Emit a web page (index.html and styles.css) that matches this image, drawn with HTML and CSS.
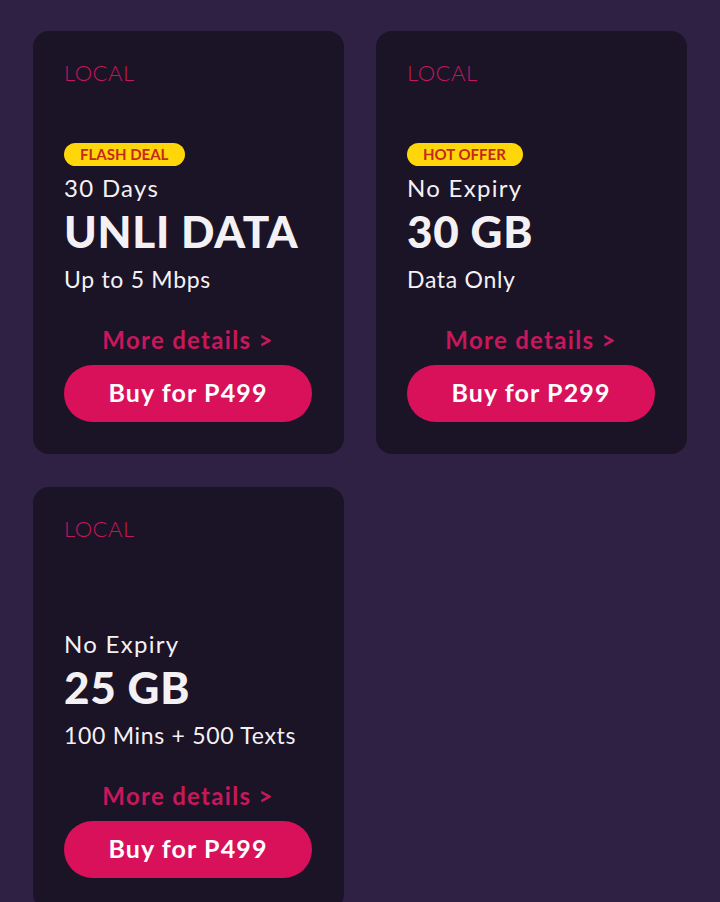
FILE: index.html
```html
<!DOCTYPE html>
<html>
<head>
<meta charset="utf-8">
<link rel="stylesheet" href="styles.css">
</head>
<body>
<div class="grid">
  <div class="card">
    <div class="tag">LOCAL</div>
    <div class="badge-slot"><span class="badge">FLASH DEAL</span></div>
    <div class="validity">30 Days</div>
    <div class="amount">UNLI DATA</div>
    <div class="desc">Up to 5 Mbps</div>
    <div class="more">More details &gt;</div>
    <button class="buy">Buy for P499</button>
  </div>
  <div class="card">
    <div class="tag">LOCAL</div>
    <div class="badge-slot"><span class="badge">HOT OFFER</span></div>
    <div class="validity">No Expiry</div>
    <div class="amount">30 GB</div>
    <div class="desc">Data Only</div>
    <div class="more">More details &gt;</div>
    <button class="buy">Buy for P299</button>
  </div>
  <div class="card">
    <div class="tag">LOCAL</div>
    <div class="badge-slot"></div>
    <div class="validity">No Expiry</div>
    <div class="amount">25 GB</div>
    <div class="desc">100 Mins + 500 Texts</div>
    <div class="more">More details &gt;</div>
    <button class="buy">Buy for P499</button>
  </div>
</div>
</body>
</html>
```
FILE: styles.css
```css
html, body {
  margin: 0;
  padding: 0;
  background: #2f2143;
  font-family: Lato, "Noto Sans", sans-serif;
  color: #f4f1f5;
  overflow: hidden;
}
.grid {
  display: grid;
  grid-template-columns: 311px 311px;
  column-gap: 32px;
  row-gap: 33px;
  padding: 31px 33px;
}
.card {
  background: #1b1326;
  border-radius: 16px;
  padding: 30px 32px 32px 31px;
  display: flex;
  flex-direction: column;
}
.tag {
  color: #c0185a;
  font-size: 22px;
  line-height: 24px;
  font-weight: 300;
  letter-spacing: 0.5px;
}
.badge-slot {
  height: 23px;
  margin-top: 58px;
  display: flex;
}
.badge {
  background: #ffd60a;
  color: #c32a1c;
  font-size: 15px;
  font-weight: 700;
  line-height: 23px;
  padding: 0 17px 0 16px;
  border-radius: 12px;
}
.validity {
  margin-top: 8px;
  font-size: 24px;
  line-height: 28px;
  font-weight: 400;
  letter-spacing: 1.3px;
}
.amount {
  font-size: 44px;
  line-height: 58px;
  font-weight: 900;
  letter-spacing: 0.7px;
}
.desc {
  margin-top: 5px;
  font-size: 23px;
  line-height: 28px;
  font-weight: 400;
  letter-spacing: 0.7px;
}
.more {
  margin-top: 33px;
  text-align: center;
  color: #c8185c;
  font-size: 24px;
  line-height: 28px;
  font-weight: 700;
  letter-spacing: 1.3px;
}
.buy {
  margin-top: 11px;
  height: 57px;
  width: 248px;
  border: none;
  border-radius: 29px;
  background: #d8115a;
  color: #fff;
  font-family: inherit;
  font-size: 25px;
  font-weight: 700;
  letter-spacing: 1.1px;
  padding: 0 0 3px;
}
```
